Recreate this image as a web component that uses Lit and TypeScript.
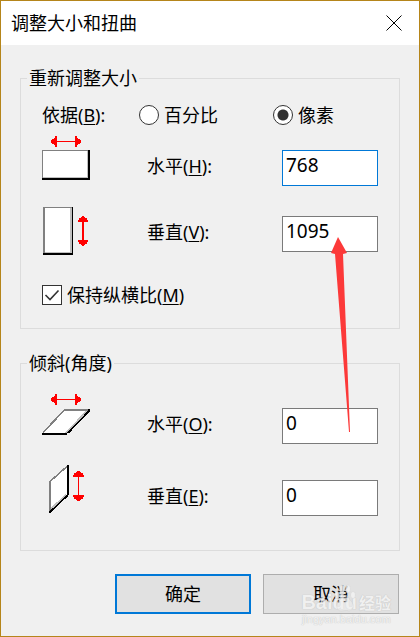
import { LitElement, html, svg, css } from "lit";
import { customElement, state } from "lit/decorators.js";

const arrowH = svg`
  <path class="red" d="M9 4h1v-1h2v-1h1v-2h2v5h18v-5h2v2h1v1h2v1h1v3h-1v1h-2v1h-1v2h-2v-5h-18v5h-2v-2h-1v-1h-2v-1h-1z"/>`;

@customElement("resize-glyph")
class ResizeGlyph extends LitElement {
  static properties = { kind: { type: String } };
  declare kind: string;
  static styles = css`
    :host { display: block; }
    svg { display: block; overflow: visible; shape-rendering: crispEdges; }
    .red { fill: #f00; }
    .white { fill: #fff; }
    .gray { fill: #808080; }
    .light { fill: #c0c0c0; }
    .grayline { fill: none; stroke: #808080; stroke-width: 1.6; }
    .lightline { fill: none; stroke: #c0c0c0; stroke-width: 2; }
    .blackline { fill: none; stroke: #000; stroke-width: 1.7; }
  `;
  shapes() {
    switch (this.kind) {
      case "width":
        return svg`${arrowH}
          <path d="M0 42h46v-28h2v30H0z"/>
          <path class="gray" d="M0 14h46v1H1v27H0z"/>
          <path class="light" d="M1 41h44V15h1v27H1z"/>
          <path class="white" d="M1 15h44v26H1z"/>`;
      case "height":
        return svg`
          <path d="M1 51h29V5h1v48H1z"/>
          <path class="gray" d="M1 5h29v1H3v45H1z"/>
          <path class="light" d="M3 50h25V6h2v45H3z"/>
          <path class="white" d="M3 6h25v44H3z"/>
          <path class="red" d="M40 14h2v1h1v1h2v2h1v2h-4v18h4v2h-1v2h-2v1h-1v1h-2v-1h-1v-1h-2v-2h-1v-2h4V20h-4v-2h1v-2h2v-1h1z"/>`;
      case "skew-x":
        return svg`${arrowH}
          <path class="white" d="M23 16h23L25 39H1z"/>
          <path class="lightline" d="M45 17L24 39"/>
          <path class="grayline" d="M1 38.500L22.500 16"/>
          <path class="gray" d="M22 15h24v2H22z"/>
          <path class="blackline" d="M47 17L26 39"/>
          <path d="M46 15h2v3h-2zM0 39h25v2H0z"/>`;
      default:
        return svg`
          <path class="white" d="M9 15L25 1v27L9 44z"/>
          <path class="lightline" d="M24 29L9 43"/>
          <path class="grayline" d="M8 15.500L25.500 0"/>
          <path class="gray" d="M7 15h2v30H7z"/>
          <path class="blackline" d="M26 29L8 46"/>
          <path d="M25 -1h2v30h-2zM7 45h2v2H7z"/>
          <path class="red" d="M35 5h3v1h1v1h2v2h1v2h-5v18h5v2h-1v2h-2v1h-1v1h-3v-1h-1v-1h-2v-2h-1v-2h5V11h-5V9h1V7h2V6h1z"/>`;
    }
  }
  render() {
    return html`<svg width="48" height="64" viewBox="0 0 48 64" aria-hidden="true">${this.shapes()}</svg>`;
  }
}

@customElement("app-root")
class AppRoot extends LitElement {
  @state() unit = "pixels";

  static styles = css`
    :host {
      display: block;
      font: 400 18px/24px "Noto Sans", "Noto Sans CJK SC", sans-serif;
      color: #000;
    }
    * { box-sizing: border-box; }
    .dialog {
      position: relative;
      min-height: 100vh;
      border: 1px solid #b5851a;
      background: #f0f0f0;
    }
    .titlebar {
      display: flex;
      align-items: center;
      justify-content: space-between;
      height: 44px;
      padding: 0 15px 0 10px;
      background: #fff;
    }
    .title { margin: 0; font: inherit; }
    .close {
      width: 20px; height: 20px; padding: 2px;
      border: 0; background: none;
    }
    .close svg { display: block; }
    .body {
      display: flex;
      flex-direction: column;
      padding: 21px 19px 22px;
    }
    .group {
      min-width: 0;
      margin: 0 0 22px;
      padding: 13px 21px 21px;
      border: 1px solid #dcdcdc;
    }
    .skew { padding: 19px 21px 20px; margin-bottom: 23px; }
    legend { margin-left: -15px; padding: 0 2px; height: 24px; }
    .units { display: grid; grid-template-columns: 97px 134px 1fr; margin-bottom: 9px; }
    .fields { display: grid; gap: 2px; }
    .skew .fields { gap: 8px; }
    .row { display: grid; grid-template-columns: 105px 1fr 96px; align-items: center; }
    .name { padding-bottom: 4px; }
    .option { display: flex; align-items: center; gap: 5px; }
    .keep { margin-top: 17px; }
    u { text-decoration-thickness: 1px; text-underline-offset: 2px; }
    .field {
      width: 100%; height: 36px;
      padding: 0 3px 6px;
      border: 1px solid #7a7a7a; border-radius: 0;
      background: #fff; color: #000;
      font: 400 19px/24px "Noto Sans", sans-serif;
      outline: 0;
    }
    .active { border-color: #0078d7; }
    .radio, .check {
      appearance: none;
      flex: none;
      width: 20px; height: 20px; margin: 0;
      border: 1px solid #333; background: #fff;
    }
    .radio { border-radius: 50%; }
    .radio:checked { background: radial-gradient(circle, #333 5px, #fff 6px); }
    .tick { display: grid; }
    .tick > * { grid-area: 1 / 1; }
    .tick svg { pointer-events: none; }
    .actions {
      display: grid;
      grid-template-columns: 136px 136px;
      justify-content: end;
      gap: 12px;
      padding-right: 1px;
    }
    .button {
      height: 40px; padding: 0;
      border: 1px solid #adadad; background: #e1e1e1;
      font: inherit; color: #000;
    }
    .primary { border: 2px solid #0078d7; }
    .pointer { position: absolute; top: 235px; right: 68px; pointer-events: none; }
    .mark {
      position: absolute; right: 28px; bottom: 10px;
      display: grid; justify-items: center;
      color: #f4f4f4; pointer-events: none;
      text-shadow: 0 0 1px #bbb, 0 0 1px #ccc;
      opacity: 0.8;
    }
    .brand { position: relative; display: flex; align-items: center; gap: 2px; font: 700 20px/20px "Liberation Sans", sans-serif; }
    .brand svg { position: absolute; left: 33px; top: -8px; }
    .zh { font: 700 16px/20px "Noto Sans CJK SC", sans-serif; }
    .site { font: 400 11px/14px "Liberation Sans", sans-serif; }
  `;

  row(kind: string, name: string, key: string, value: string, active = false) {
    return html`<div class="row">
      <resize-glyph kind=${kind}></resize-glyph>
      <label class="name" for=${kind}>${name}(<u>${key}</u>):</label>
      <input class="field ${active ? "active" : ""}" id=${kind} type="text" .value=${value} />
    </div>`;
  }

  radio(value: string, text: string) {
    return html`<label class="option">
      <input class="radio" type="radio" name="unit" .checked=${this.unit === value}
        @change=${() => (this.unit = value)} />${text}</label>`;
  }

  render() {
    return html`<main class="dialog">
      <header class="titlebar">
        <h1 class="title">调整大小和扭曲</h1>
        <button class="close" aria-label="关闭">
          <svg width="16" height="16" viewBox="0 0 16 16"><path d="M.5.5l15 15M15.5.5l-15 15" stroke="#000" fill="none"/></svg>
        </button>
      </header>
      <form class="body" @submit=${(e: Event) => e.preventDefault()}>
        <fieldset class="group">
          <legend>重新调整大小</legend>
          <div class="units">
            <span>依据(<u>B</u>):</span>
            ${this.radio("percent", "百分比")}
            ${this.radio("pixels", "像素")}
          </div>
          <div class="fields">
            ${this.row("width", "水平", "H", "768", true)}
            ${this.row("height", "垂直", "V", "1095")}
          </div>
          <label class="option keep">
            <span class="tick">
              <input class="check" type="checkbox" checked />
              <svg width="20" height="20" viewBox="0 0 20 20"><path d="M3.5 10l4.5 4.5L16.500 5.500" stroke="#333" stroke-width="1.6" fill="none"/></svg>
            </span>
            <span>保持纵横比(<u>M</u>)</span>
          </label>
        </fieldset>
        <fieldset class="group skew">
          <legend>倾斜(角度)</legend>
          <div class="fields">
            ${this.row("skew-x", "水平", "O", "0")}
            ${this.row("skew-y", "垂直", "E", "0")}
          </div>
        </fieldset>
        <div class="actions">
          <button class="button primary" type="submit">确定</button>
          <button class="button" type="button">取消</button>
        </div>
      </form>
      <svg class="pointer" width="20" height="198" viewBox="0 0 20 198" aria-hidden="true">
        <path d="M7 1L16 17L12 18L19 196H18L4 18L0 17z" fill="#fc3939"/>
      </svg>
      <div class="mark" aria-hidden="true">
        <div class="brand"><span>Baidu</span>
          <svg width="22" height="28" viewBox="0 0 22 28" fill="#f4f4f4" stroke="#d0d0d0" stroke-width="0.500">
            <ellipse cx="3" cy="11" rx="2.500" ry="3.500"/><ellipse cx="8" cy="5" rx="2.500" ry="4"/>
            <ellipse cx="14" cy="5" rx="2.500" ry="4"/><ellipse cx="19" cy="11" rx="2.500" ry="3.500"/>
            <path fill-opacity="0.5" d="M11 11c-3 0-4 4-6 6-4 4-2 10 2 10 2 0 6-1 8 0 4 0 6-6 2-10-2-2-3-6-6-6z"/>
          </svg><span class="zh">经验</span></div>
        <span class="site">jingyan.baidu.com</span>
      </div>
    </main>`;
  }
}
